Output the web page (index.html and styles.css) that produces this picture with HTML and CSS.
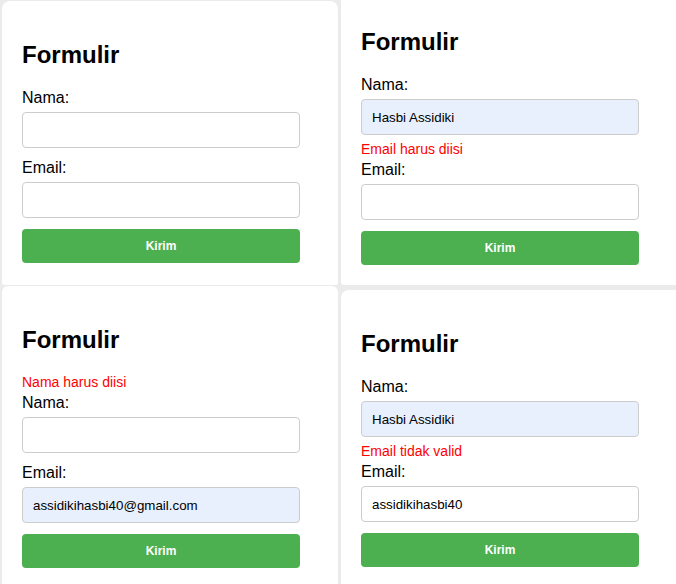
FILE: index.html
```html
<!DOCTYPE html>
<html lang="id">
<head>
<meta charset="utf-8">
<title>Formulir</title>
<link rel="stylesheet" href="styles.css">
</head>
<body>
<div class="collage">
  <div class="column column-left">
    <section class="shot shot-tl">
      <form class="card">
        <h2 class="title">Formulir</h2>
        <label class="label">Nama:</label>
        <input class="field" type="text" value="">
        <label class="label">Email:</label>
        <input class="field" type="text" value="">
        <button class="submit" type="button">Kirim</button>
      </form>
    </section>
    <section class="shot shot-bl">
      <form class="card">
        <h2 class="title">Formulir</h2>
        <div class="error">Nama harus diisi</div>
        <label class="label">Nama:</label>
        <input class="field" type="text" value="">
        <label class="label">Email:</label>
        <input class="field autofill" type="text" value="assidikihasbi40@gmail.com">
        <button class="submit" type="button">Kirim</button>
      </form>
    </section>
  </div>
  <div class="column column-right">
    <section class="shot shot-tr">
      <form class="card card-scrolled">
        <h2 class="title">Formulir</h2>
        <label class="label">Nama:</label>
        <input class="field autofill" type="text" value="Hasbi Assidiki">
        <div class="error">Email harus diisi</div>
        <label class="label">Email:</label>
        <input class="field" type="text" value="">
        <button class="submit" type="button">Kirim</button>
      </form>
    </section>
    <section class="shot shot-br">
      <form class="card">
        <h2 class="title">Formulir</h2>
        <label class="label">Nama:</label>
        <input class="field autofill" type="text" value="Hasbi Assidiki">
        <div class="error">Email tidak valid</div>
        <label class="label">Email:</label>
        <input class="field" type="text" value="assidikihasbi40">
        <button class="submit" type="button">Kirim</button>
      </form>
    </section>
  </div>
</div>
</body>
</html>
```

FILE: styles.css
```css
html, body {
  margin: 0;
  padding: 0;
  background: #ebebeb;
  font-family: "Liberation Sans", Arial, sans-serif;
  color: #000;
}

.collage {
  width: 676px;
  height: 584px;
  overflow: hidden;
  display: flex;
  padding-left: 2px;
  box-sizing: border-box;
  gap: 3px;
}

.column {
  display: flex;
  flex-direction: column;
}

.column-left {
  width: 336px;
  padding-top: 1px;
  gap: 1px;
}

.column-right {
  width: 335px;
  gap: 5px;
}

.shot {
  background: #fff;
  overflow: hidden;
}

.shot-tl {
  height: 284px;
  flex: none;
  border-radius: 8px 8px 2px 2px;
}

.shot-tr {
  height: 285px;
  flex: none;
  border-radius: 0 0 0 3px;
}

.shot-bl {
  flex: 1;
  border-radius: 6px 6px 0 0;
}

.shot-br {
  flex: 1;
  border-radius: 8px 0 0 0;
}

.card {
  display: flex;
  flex-direction: column;
  align-items: flex-start;
  padding: 20px;
  margin: 0;
}

.card-scrolled {
  margin-top: -12px;
}

.title {
  font-size: 24px;
  font-weight: bold;
  line-height: 27.6px;
  margin: 20px 0;
}

.label {
  display: block;
  font-size: 16px;
  line-height: 18.4px;
  margin-bottom: 5px;
}

.field {
  display: block;
  box-sizing: border-box;
  width: 278px;
  height: 36px;
  margin: 0 0 11px 0;
  padding: 0 10px;
  border: 1px solid #cccccc;
  border-radius: 4px;
  background: #fff;
  font-family: "Liberation Sans", Arial, sans-serif;
  font-size: 13.33px;
  color: #000;
  outline: none;
}

.autofill {
  background: #e8f0fe;
}

.error {
  color: #ff0000;
  font-size: 14px;
  line-height: 16px;
  margin-bottom: 4px;
}

.field + .error {
  margin-top: -5px;
}

.submit {
  display: block;
  box-sizing: border-box;
  width: 278px;
  height: 34px;
  border: none;
  border-radius: 4px;
  background: #4caf50;
  color: #fff;
  font-family: "Liberation Sans", Arial, sans-serif;
  font-size: 12px;
  font-weight: bold;
  padding: 0;
}
```
